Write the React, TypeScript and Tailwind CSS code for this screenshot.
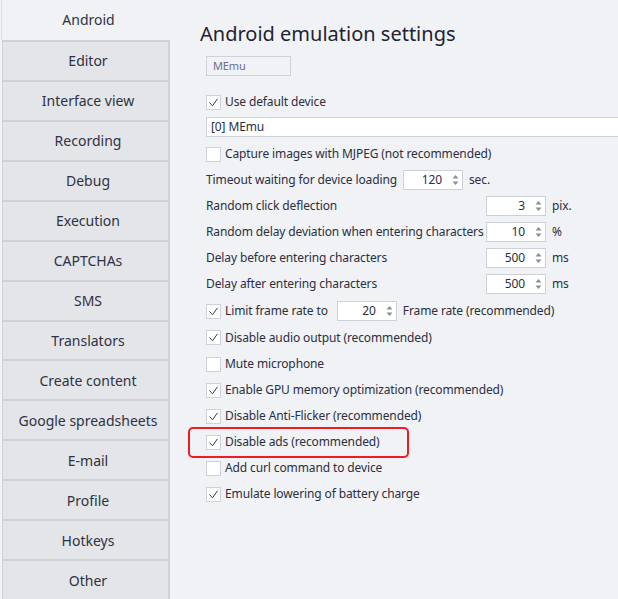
import type { ReactNode } from 'react';

const tabs = [
  'Android',
  'Editor',
  'Interface view',
  'Recording',
  'Debug',
  'Execution',
  'CAPTCHAs',
  'SMS',
  'Translators',
  'Create content',
  'Google spreadsheets',
  'E-mail',
  'Profile',
  'Hotkeys',
  'Other',
];

const font = { fontFamily: '"Segoe UI", "Noto Sans", "Open Sans", sans-serif' };

function CheckBox({ checked }: { checked: boolean }) {
  return (
    <span className="flex h-[15px] w-[15px] shrink-0 items-center justify-center border border-[#cdd1d9] bg-white">
      {checked && (
        <svg width="11" height="11" viewBox="0 0 11 11">
          <polyline points="1.5,5.5 4.5,8.8 9.5,1.8" fill="none" stroke="#3a3d4a" strokeWidth="1" />
        </svg>
      )}
    </span>
  );
}

function Spin({ value }: { value: string }) {
  return (
    <span className="flex h-[20px] w-[60px] shrink-0 items-center border border-[#cdd1d9] bg-white pr-[3px]">
      <span className="flex-1 pr-[10px] text-right">{value}</span>
      <svg width="7" height="12" viewBox="0 0 7 12">
        <polygon points="3.5,1 6.5,4.5 0.5,4.5" fill="#8a8e99" />
        <polygon points="3.5,11 6.5,7.5 0.5,7.5" fill="#8a8e99" />
      </svg>
    </span>
  );
}

function CheckRow({ checked, children, h = 'h-[26px]' }: { checked: boolean; children: ReactNode; h?: string }) {
  return (
    <div className={`flex ${h} items-center gap-[4px]`}>
      <CheckBox checked={checked} />
      <span className="whitespace-nowrap">{children}</span>
    </div>
  );
}

function SpinRow({ label, value, unit }: { label: string; value: string; unit: string }) {
  return (
    <div className="flex h-[26px] items-center">
      <span className="min-w-[280px] whitespace-nowrap">{label}</span>
      <Spin value={value} />
      <span className="ml-[6px]">{unit}</span>
    </div>
  );
}

export default function App() {
  return (
    <div className="flex h-[599px] w-[618px] overflow-hidden bg-[#f0f2f6] text-[#2c2f3e]" style={font}>
      <nav className="flex w-[170px] shrink-0 flex-col pl-[2px] text-[14px] text-[#2f3242]">
        {tabs.map((t, i) =>
          i === 0 ? (
            <div key={t} className="-ml-[1px] flex h-[40px] items-center justify-center border-l border-[#dde0e6] bg-[#f0f2f6] pl-[5px]">
              {t}
            </div>
          ) : (
            <div key={t} className="flex h-[40px] items-center justify-center border-t-[2px] border-r-[2px] border-l border-[#cdd1d9] bg-[#e4e5e9] pl-[5px]">
              {t}
            </div>
          ),
        )}
      </nav>

      <main className="flex-1 pl-[30px] text-[12px] tracking-[-0.12px]">
        <h1 className="mt-[19px] h-[30px] text-[20px] leading-[30px] tracking-normal text-[#1f2230]">Android emulation settings</h1>

        <div className="ml-[6px]">
          <div className="mt-[7px] flex h-[20px] w-[85px] items-center border border-[#cdd1d9] px-[6px] text-[11px] text-[#6a7090]">
            MEmu
          </div>

          <div className="mt-[13px]">
            <CheckRow checked>Use default device</CheckRow>
          </div>
          <div className="mt-[2px] -mr-[20px] flex h-[20px] items-center border border-[#cdd1d9] bg-white px-[4px]">[0] MEmu</div>

          <div className="mt-[4px]">
            <CheckRow checked={false}>Capture images with MJPEG (not recommended)</CheckRow>
          </div>

          <div className="flex h-[26px] items-center">
            <span className="mr-[6px] whitespace-nowrap">Timeout waiting for device loading</span>
            <Spin value="120" />
            <span className="ml-[6px]">sec.</span>
          </div>
          <SpinRow label="Random click deflection" value="3" unit="pix." />
          <SpinRow label="Random delay deviation when entering characters" value="10" unit="%" />
          <SpinRow label="Delay before entering characters" value="500" unit="ms" />
          <SpinRow label="Delay after entering characters" value="500" unit="ms" />

          <div className="flex h-[27px] items-center gap-[4px] pt-[1px]">
            <CheckBox checked />
            <span className="mr-[5px] whitespace-nowrap">Limit frame rate to</span>
            <Spin value="20" />
            <span className="ml-[2px] whitespace-nowrap">Frame rate (recommended)</span>
          </div>
          <CheckRow checked h="h-[27px]">Disable audio output (recommended)</CheckRow>
          <CheckRow checked={false}>Mute microphone</CheckRow>
          <CheckRow checked>Enable GPU memory optimization (recommended)</CheckRow>
          <CheckRow checked>Disable Anti-Flicker (recommended)</CheckRow>
          <div className="relative">
            <CheckRow checked>Disable ads (recommended)</CheckRow>
            <span className="pointer-events-none absolute -left-[18px] -top-[2px] h-[31px] w-[221px] rounded-[5px] border-[2px] border-[#ee1c25]" />
          </div>
          <CheckRow checked={false}>Add curl command to device</CheckRow>
          <CheckRow checked>Emulate lowering of battery charge</CheckRow>
        </div>
      </main>
    </div>
  );
}
